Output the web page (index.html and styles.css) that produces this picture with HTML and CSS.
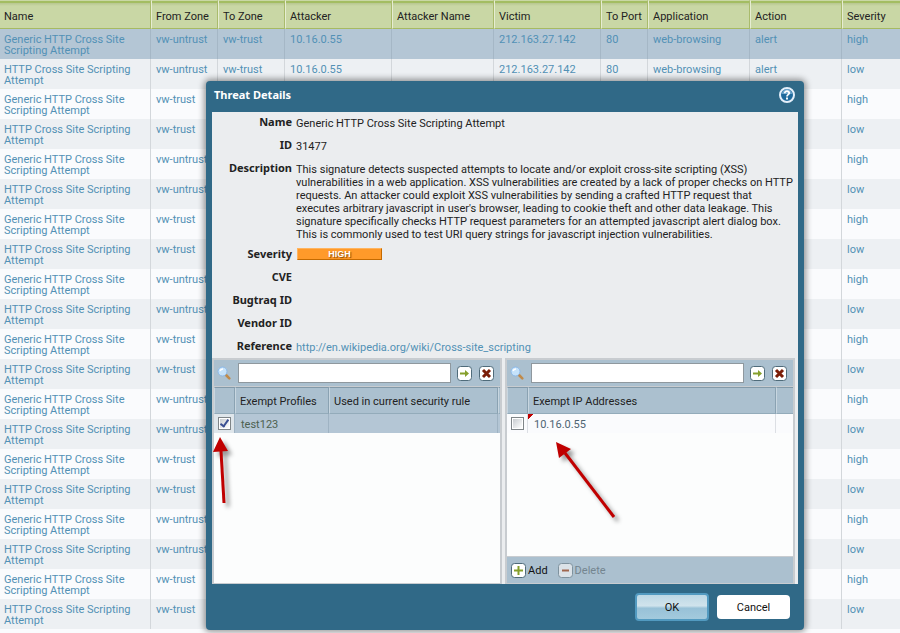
FILE: index.html
```
<!DOCTYPE html>
<html lang="en">
<head>
  <meta charset="utf-8">
  <title>Threat Details</title>
  <link rel="stylesheet" href="styles.css">
</head>
<body>

<table class="log-table">
  <colgroup>
    <col class="col-name">
    <col class="col-zone">
    <col class="col-zone">
    <col class="col-address">
    <col class="col-wide">
    <col class="col-address">
    <col class="col-port">
    <col class="col-wide">
    <col class="col-action">
    <col>
  </colgroup>
  <thead>
    <tr>
      <th>Name</th>
      <th>From Zone</th>
      <th>To Zone</th>
      <th>Attacker</th>
      <th>Attacker Name</th>
      <th>Victim</th>
      <th>To Port</th>
      <th>Application</th>
      <th>Action</th>
      <th>Severity</th>
    </tr>
  </thead>
  <tbody id="log-rows"></tbody>
</table>

<div class="dialog" role="dialog" aria-labelledby="dialog-title">
  <div class="dialog-header">
    <h1 class="dialog-title" id="dialog-title">Threat Details</h1>
    <button type="button" class="icon-button" aria-label="Help">
      <svg width="16" height="16" viewBox="0 0 16 16">
        <circle cx="8" cy="8" r="7" fill="#1f6a9c" stroke="#e4effa" stroke-width="2"/>
        <path d="M3 7a5 5 0 0 1 10 0z" fill="#6ea6cc"/>
        <path d="M5.8 6.2C5.8 3.4 10.3 3.6 10.2 6.2 10.1 7.7 8 7.6 8 9.4" fill="none" stroke="#fff" stroke-width="1.8"/>
        <rect x="7" y="10.5" width="2" height="2" fill="#fff"/>
      </svg>
    </button>
  </div>

  <div class="dialog-body">
    <dl class="details">
      <dt>Name</dt>
      <dd>Generic HTTP Cross Site Scripting Attempt</dd>
      <dt>ID</dt>
      <dd>31477</dd>
      <dt>Description</dt>
      <dd class="description">This signature detects suspected attempts to locate and/or exploit cross-site scripting (XSS)<br>
        vulnerabilities in a web application. XSS vulnerabilities are created by a lack of proper checks on HTTP<br>
        requests. An attacker could exploit XSS vulnerabilities by sending a crafted HTTP request that<br>
        executes arbitrary javascript in user's browser, leading to cookie theft and other data leakage. This<br>
        signature specifically checks HTTP request parameters for an attempted javascript alert dialog box.<br>
        This is commonly used to test URI query strings for javascript injection vulnerabilities.</dd>
      <dt>Severity</dt>
      <dd><span class="severity-high">HIGH</span></dd>
      <dt>CVE</dt>
      <dd></dd>
      <dt>Bugtraq ID</dt>
      <dd></dd>
      <dt>Vendor ID</dt>
      <dd></dd>
      <dt>Reference</dt>
      <dd><a href="http://en.wikipedia.org/wiki/Cross-site_scripting">http://en.wikipedia.org/wiki/Cross-site_scripting</a></dd>
    </dl>

    <div class="panels">
      <div class="panel">
        <div class="toolbar">
          <svg class="search-icon" width="14" height="14" viewBox="0 0 14 14">
            <path d="M8.5 8.5l3.8 3.8" stroke="#c08a4a" stroke-width="2.6" stroke-linecap="round"/>
            <circle cx="5.5" cy="5.5" r="4.5" fill="#c5e2fa" stroke="#8db9e8"/>
            <path d="M3 5a3 3 0 0 1 3-2" fill="none" stroke="#fff" stroke-width="1.5"/>
          </svg>
          <input type="text" class="search-field" aria-label="Search profiles">
          <button type="button" class="icon-button" aria-label="Apply filter">
            <svg width="15" height="15" viewBox="0 0 15 15">
              <rect x=".5" y=".5" width="14" height="14" rx="3" fill="#fff" stroke="#4f6b7a"/>
              <path d="M3 6.5h5V4l4 3.5L8 11V8.500H3z" fill="#86a02c"/>
            </svg>
          </button>
          <button type="button" class="icon-button" aria-label="Clear filter">
            <svg width="15" height="15" viewBox="0 0 15 15">
              <rect x=".5" y=".5" width="14" height="14" rx="3" fill="#fff" stroke="#4f6b7a"/>
              <path d="M4 4l7 7m0-7l-7 7" stroke="#7c1e08" stroke-width="3"/>
            </svg>
          </button>
        </div>
        <table class="panel-table">
          <colgroup>
            <col class="col-check">
            <col class="col-profile">
            <col>
            <col class="col-edge">
          </colgroup>
          <thead>
            <tr>
              <th></th>
              <th>Exempt Profiles</th>
              <th>Used in current security rule</th>
              <th></th>
            </tr>
          </thead>
          <tbody>
            <tr class="selected">
              <td class="check-cell"><input type="checkbox" class="check" aria-label="test123" checked></td>
              <td class="profile-name">test123</td>
              <td></td>
              <td></td>
            </tr>
          </tbody>
        </table>
      </div>

      <div class="panel">
        <div class="toolbar">
          <svg class="search-icon" width="14" height="14" viewBox="0 0 14 14">
            <path d="M8.5 8.5l3.8 3.8" stroke="#c08a4a" stroke-width="2.6" stroke-linecap="round"/>
            <circle cx="5.5" cy="5.5" r="4.5" fill="#c5e2fa" stroke="#8db9e8"/>
            <path d="M3 5a3 3 0 0 1 3-2" fill="none" stroke="#fff" stroke-width="1.5"/>
          </svg>
          <input type="text" class="search-field" aria-label="Search addresses">
          <button type="button" class="icon-button" aria-label="Apply filter">
            <svg width="15" height="15" viewBox="0 0 15 15">
              <rect x=".5" y=".5" width="14" height="14" rx="3" fill="#fff" stroke="#4f6b7a"/>
              <path d="M3 6.5h5V4l4 3.5L8 11V8.500H3z" fill="#86a02c"/>
            </svg>
          </button>
          <button type="button" class="icon-button" aria-label="Clear filter">
            <svg width="15" height="15" viewBox="0 0 15 15">
              <rect x=".5" y=".5" width="14" height="14" rx="3" fill="#fff" stroke="#4f6b7a"/>
              <path d="M4 4l7 7m0-7l-7 7" stroke="#7c1e08" stroke-width="3"/>
            </svg>
          </button>
        </div>
        <table class="panel-table">
          <colgroup>
            <col class="col-check">
            <col>
            <col class="col-spare">
          </colgroup>
          <thead>
            <tr>
              <th></th>
              <th>Exempt IP Addresses</th>
              <th></th>
            </tr>
          </thead>
          <tbody>
            <tr>
              <td class="check-cell"><input type="checkbox" class="check" aria-label="10.16.0.55"></td>
              <td class="edited">10.16.0.55</td>
              <td></td>
            </tr>
          </tbody>
        </table>
        <div class="panel-footer">
          <button type="button" class="text-button">
            <svg width="15" height="15" viewBox="0 0 15 15">
              <rect x=".5" y=".5" width="14" height="14" rx="3" fill="#fff" stroke="#4f6b7a"/>
              <path d="M7.5 3v9M3 7.5h9" stroke="#86a02c" stroke-width="2"/>
            </svg>
            Add
          </button>
          <button type="button" class="text-button" disabled>
            <svg width="15" height="15" viewBox="0 0 15 15">
              <rect x=".5" y=".5" width="14" height="14" rx="3" fill="#dbe2e8" stroke="#7f929e"/>
              <path d="M4 7.5h7" stroke="#a0674f" stroke-width="2"/>
            </svg>
            Delete
          </button>
        </div>
      </div>
    </div>
  </div>

  <div class="dialog-footer">
    <button type="button" class="button button-primary">OK</button>
    <button type="button" class="button">Cancel</button>
  </div>

  <!-- callout arrows -->
  <svg class="arrow arrow-profile" width="24" height="72" viewBox="0 0 24 72">
    <path d="M9 14L12 66" stroke="#c00000" stroke-width="3"/>
    <path d="M8 0L1 15L16 14z" fill="#c00000"/>
  </svg>
  <svg class="arrow arrow-address" width="66" height="82" viewBox="0 0 66 82">
    <path d="M9 11L58 75" stroke="#c00000" stroke-width="3"/>
    <path d="M0 0L15 7L3 16z" fill="#c00000"/>
  </svg>
</div>

<script>
  var tbody = document.getElementById("log-rows");

  for (var i = 0; i < 20; i++) {
    var generic = i % 2 === 0;
    var loaded = i < 2; // later rows only have name, zone and severity
    var cells = [
      generic ? "Generic HTTP Cross Site Scripting Attempt" : "HTTP Cross Site Scripting Attempt",
      i % 4 < 2 ? "vw-untrust" : "vw-trust",
      loaded ? "vw-trust" : "",
      loaded ? "10.16.0.55" : "",
      "",
      loaded ? "212.163.27.142" : "",
      loaded ? "80" : "",
      loaded ? "web-browsing" : "",
      loaded ? "alert" : "",
      generic ? "high" : "low"
    ];

    var row = document.createElement("tr");
    if (i === 0) {
      row.className = "selected";
    }
    cells.forEach(function(text) {
      var cell = document.createElement("td");
      cell.textContent = text;
      row.appendChild(cell);
    });
    tbody.appendChild(row);
  }
</script>

</body>
</html>
```
FILE: styles.css
```
* {
  box-sizing: border-box;
}

body {
  margin: 0;
  background-color: #fafbfd;
  font-family: Roboto, Tahoma, sans-serif;
  font-size: 11px;
  color: #222;
}

button,
input {
  font-family: inherit;
  font-size: inherit;
}

svg {
  display: block;
  flex: none;
}

/* Threat log */
.log-table {
  width: 100%;
  table-layout: fixed;
  border-collapse: separate;
  border-spacing: 0;
}

.col-name { width: 151px; }
.col-zone { width: 67px; }
.col-address { width: 107px; }
.col-wide { width: 102px; }
.col-port { width: 47px; }
.col-action { width: 92px; }

.log-table th {
  height: 29px;
  padding: 3px 0 0 4px;
  background: linear-gradient(#a3bd62 0, #a3bd62 2px, #b7c690 2px, #c9d7a5 5px);
  border-top: 1px solid #c9d7a5;
  border-right: 1px solid #a9bb6c;
  border-bottom: 1px solid #a6ba62;
  border-left: 1px solid #e6edd2;
  font-weight: normal;
  text-align: left;
  white-space: nowrap;
}

.log-table td {
  height: 30px;
  padding: 5px 0 3px 5px;
  border-right: 1px solid #d3d7db;
  line-height: 11px;
  vertical-align: top;
  color: #5291b5;
}

.log-table th:first-child,
.log-table td:first-child {
  padding-left: 4px;
  border-left: 0;
}

.log-table th:last-child,
.log-table td:last-child {
  border-right: 0;
}

.log-table tbody tr:nth-child(even) {
  background-color: #edf0f3;
}

.log-table .selected {
  background-color: #b4c6d5;
}

.log-table .selected td {
  border-right-color: #a5b7c6;
}

/* Dialog */
.dialog {
  position: absolute;
  top: 81px;
  left: 206px;
  width: 598px;
  padding: 0 6px;
  background-color: #306987;
  border-radius: 4px;
  box-shadow: 0 0 6px 2px rgba(0, 0, 0, 0.4);
}

.dialog-header {
  display: flex;
  align-items: center;
  justify-content: space-between;
  height: 31px;
  padding: 0 3px 3px 2px;
}

.dialog-title {
  margin: 0;
  font-family: "Noto Sans", Tahoma, sans-serif;
  font-size: 11px;
  line-height: 12px;
  color: #fff;
}

.icon-button {
  padding: 0;
  background: none;
  border: 0;
}

.dialog-body {
  background-color: #ebedef;
}

.details {
  display: grid;
  grid-template-columns: 80px 1fr;
  column-gap: 4px;
  row-gap: 10px;
  margin: 0;
  padding: 3px 0 6px;
  line-height: 13px;
}

.details dt {
  font-family: "Noto Sans", Tahoma, sans-serif;
  font-weight: bold;
  text-align: right;
}

.details dd {
  min-height: 13px;
  margin: 0 0 -2px;
  padding-top: 2px;
  white-space: nowrap;
}

.details .description {
  margin-bottom: -4px;
}

.details a {
  color: #5291b5;
  text-decoration: none;
}

.severity-high {
  display: block;
  width: 85px;
  height: 12px;
  margin: -1px 0 0 1px;
  background-color: #ff9a2a;
  border: 1px solid #c46a00;
  border-top-color: #ffb45e;
  border-left-color: #ffb45e;
  font-family: "Liberation Sans", Arial, sans-serif;
  font-size: 9px;
  font-weight: bold;
  line-height: 11px;
  text-align: center;
  color: #fff;
  text-shadow: 1px 1px 1px #8a4a00;
}

/* Exemption panels */
.panels {
  display: grid;
  grid-template-columns: 1fr 1fr;
  column-gap: 3px;
  padding-right: 3px;
}

.panel {
  display: flex;
  flex-direction: column;
  min-height: 226px;
  background-color: #fcfdfd;
  border: 2px solid #c8ccd0;
  border-bottom-width: 1px;
}

.toolbar {
  display: flex;
  align-items: center;
  gap: 7px;
  height: 27px;
  padding: 0 6px 0 3px;
  background-color: #abc0cf;
  border-bottom: 1px solid #c8ccd0;
}

.search-field {
  flex: 1;
  min-width: 0;
  height: 20px;
  margin: 0 -1px 0 0;
  padding: 0 4px;
  background-color: #fff;
  border: 1px solid #8f989e;
}

.panel-table {
  width: 100%;
  table-layout: fixed;
  border-collapse: separate;
  border-spacing: 0;
}

.col-check { width: 21px; }
.col-profile { width: 94px; }
.col-edge { width: 2px; }
.col-spare { width: 17px; }

.panel-table th {
  height: 27px;
  padding: 2px 4px 0;
  background-color: #abc0cf;
  border-top: 1px solid #8299a8;
  border-right: 1px solid #8aa2b2;
  border-bottom: 1px solid #93abba;
  border-left: 1px solid #c8d6e0;
  font-weight: normal;
  text-align: left;
  white-space: nowrap;
}

.panel-table td {
  height: 19px;
  padding: 2px 6px 0;
  background-color: #fafbfd;
  border-right: 1px solid #dcdfe4;
  color: #4e6472;
}

.panel-table th:last-child,
.panel-table td:last-child {
  padding: 0;
  border-right: 0;
}

.panel-table .selected td {
  background-color: #b4c6d5;
  border-right-color: #9fb3c3;
}

.panel-table td.profile-name {
  color: #4d6150;
}

.panel-table td.check-cell {
  padding: 0 0 0 4px;
}

.panel-table .selected td.check-cell {
  background-color: #dfe6eb;
}

.check {
  display: block;
  appearance: none;
  width: 13px;
  height: 13px;
  margin: 0;
  background: linear-gradient(135deg, #c8ccd0, #fff) center / 9px 9px no-repeat #fff;
  border: 1px solid #7f8588;
}

.check:checked::after {
  content: "";
  display: block;
  box-sizing: border-box;
  width: 5px;
  height: 9px;
  margin-left: 3px;
  border: solid #3a4f92;
  border-width: 0 2px 2px 0;
  transform: rotate(35deg);
}

/* red corner marks a changed cell */
.panel-table td.edited {
  background: linear-gradient(135deg, #c00000 4px, transparent 4px) no-repeat #fafbfd;
}

.panel-footer {
  display: flex;
  align-items: center;
  gap: 10px;
  height: 27px;
  margin-top: auto;
  padding: 0 4px;
  background-color: #abc0cf;
  border-top: 1px solid #c8ccd0;
}

.text-button {
  display: flex;
  align-items: center;
  gap: 2px;
  padding: 0;
  background: none;
  border: 0;
  color: #111;
}

.text-button:disabled {
  color: #74858f;
}

.dialog-footer {
  display: flex;
  justify-content: flex-end;
  gap: 8px;
  padding: 9px 8px;
}

.button {
  width: 73px;
  height: 24px;
  margin: 2px 0;
  padding: 0;
  background-color: #fff;
  border: 0;
  border-radius: 4px;
  color: #111;
}

.button-primary {
  width: 74px;
  height: 28px;
  margin: 0;
  background: linear-gradient(#bdd8e5, #d0e3ec 45%, #98c1d7 55%, #a3cadd);
  border: 2px solid #529ac0;
}

/* Callout arrows */
.arrow {
  position: absolute;
  filter: drop-shadow(4px 4px 2px rgba(0, 0, 0, 0.4));
}

.arrow-profile {
  top: 356px;
  left: 6px;
}

.arrow-address {
  top: 361px;
  left: 350px;
}
```
